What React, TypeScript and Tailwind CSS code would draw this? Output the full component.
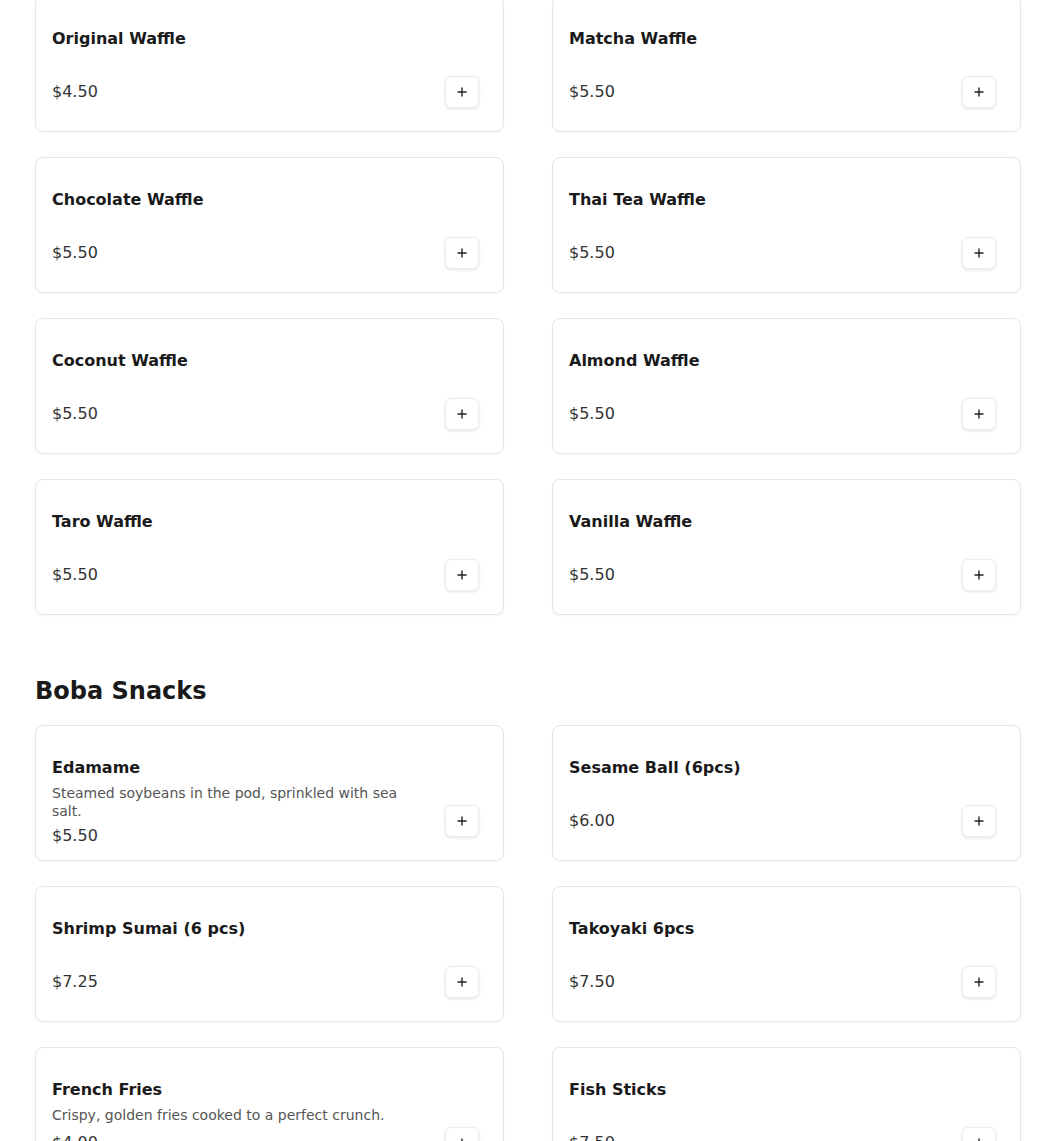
const waffles = [
  { name: "Original Waffle", price: "$4.50" },
  { name: "Matcha Waffle", price: "$5.50" },
  { name: "Chocolate Waffle", price: "$5.50" },
  { name: "Thai Tea Waffle", price: "$5.50" },
  { name: "Coconut Waffle", price: "$5.50" },
  { name: "Almond Waffle", price: "$5.50" },
  { name: "Taro Waffle", price: "$5.50" },
  { name: "Vanilla Waffle", price: "$5.50" },
];

const snacks = [
  {
    name: "Edamame",
    description: "Steamed soybeans in the pod, sprinkled with sea salt.",
    price: "$5.50",
  },
  { name: "Sesame Ball (6pcs)", price: "$6.00" },
  { name: "Shrimp Sumai (6 pcs)", price: "$7.25" },
  { name: "Takoyaki 6pcs", price: "$7.50" },
  {
    name: "French Fries",
    description: "Crispy, golden fries cooked to a perfect crunch.",
    price: "$4.00",
  },
  { name: "Fish Sticks", price: "$7.50" },
];

type Item = { name: string; price: string; description?: string };

function MenuCard({ item }: { item: Item }) {
  return (
    <div className="flex h-[136px] justify-between rounded-lg border border-[#e6e6e6] bg-white shadow-[0_1px_2px_rgba(0,0,0,0.04)]">
      <div className="min-w-0 flex-1 pl-4 pr-6 pt-[30px]">
        <h3 className="text-base font-bold leading-6 text-[#1a1a1a]">{item.name}</h3>
        <p className="mb-1 mt-[5px] min-h-5 max-w-[360px] text-sm leading-tight text-[#555555]">
          {item.description}
        </p>
        <p className="text-base leading-6 text-[#333333]">{item.price}</p>
      </div>
      <div className="flex items-end pb-[23px] pr-6">
        <button
          type="button"
          className="flex h-8 w-[34px] items-center justify-center rounded-md border border-[#ededed] bg-white text-[#222] shadow-[0_1px_3px_rgba(0,0,0,0.12)]"
        >
          <svg width="10" height="10" viewBox="0 0 10 10" fill="none" stroke="currentColor" strokeWidth="1.4">
            <path d="M5 0.5v9M0.5 5h9" />
          </svg>
        </button>
      </div>
    </div>
  );
}

export default function App() {
  return (
    <div
      className="min-h-screen bg-white"
      style={{ fontFamily: '"DejaVu Sans", Verdana, sans-serif' }}
    >
      <div className="-mt-1 ml-[35px] w-[986px]">
        <div className="grid grid-cols-2 gap-x-12 gap-y-[25px]">
          {waffles.map((item) => (
            <MenuCard key={item.name} item={item} />
          ))}
        </div>

        <h2 className="mb-[18px] mt-[60px] text-2xl font-bold leading-8 text-[#1a1a1a]">
          Boba Snacks
        </h2>
        <div className="grid grid-cols-2 gap-x-12 gap-y-[25px] pb-10">
          {snacks.map((item) => (
            <MenuCard key={item.name} item={item} />
          ))}
        </div>
      </div>
    </div>
  );
}
